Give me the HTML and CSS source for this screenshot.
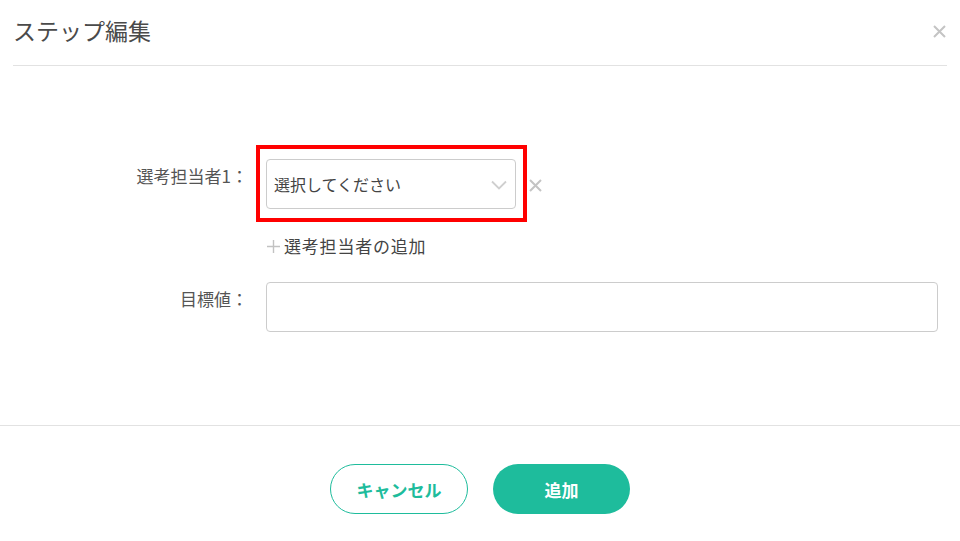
FILE: index.html
```html
<!DOCTYPE html>
<html lang="ja">
<head>
    <meta charset="UTF-8">
    <meta name="viewport" content="width=device-width, initial-scale=1.0">
    <title>ステップ編集</title>
    <link rel="stylesheet" href="styles.css">
</head>
<body>
    <div class="modal">
        <div class="modal-header">
            <h2 class="modal-title">ステップ編集</h2>
            <button type="button" class="modal-close" aria-label="閉じる">
                <svg width="13" height="13" viewBox="0 0 13 13"><path d="M1 1L12 12M12 1L1 12" stroke="#c4c4c4" stroke-width="2" fill="none"/></svg>
            </button>
        </div>

        <form class="modal-body" id="step-form">
            <div class="form-row">
                <label class="form-label" for="reviewer-1">選考担当者1：</label>
                <div class="field-line">
                    <div class="select-wrap highlighted">
                        <select id="reviewer-1" class="form-select">
                            <option>選択してください</option>
                        </select>
                        <svg class="chevron" width="16" height="10" viewBox="0 0 16 10"><path d="M1 1.5L8 8.5L15 1.5" stroke="#cfcfcf" stroke-width="1.8" fill="none"/></svg>
                    </div>
                    <button type="button" class="remove-btn" aria-label="削除">
                        <svg width="13" height="13" viewBox="0 0 13 13"><path d="M1 1L12 12M12 1L1 12" stroke="#c4c4c4" stroke-width="2" fill="none"/></svg>
                    </button>
                </div>
            </div>

            <div class="form-row add-row">
                <span></span>
                <a href="#" class="add-link">
                    <svg class="plus" width="13" height="13" viewBox="0 0 13 13"><path d="M6.5 0V13M0 6.5H13" stroke="#c2c2c2" stroke-width="1.4" fill="none"/></svg>
                    選考担当者の追加
                </a>
            </div>

            <div class="form-row target-row">
                <label class="form-label" for="target">目標値：</label>
                <input type="text" id="target" class="form-input">
            </div>
        </form>

        <div class="modal-footer">
            <button type="button" class="btn btn-outline">キャンセル</button>
            <button type="submit" form="step-form" class="btn btn-primary">追加</button>
        </div>
    </div>
</body>
</html>
```

FILE: styles.css
```css
body {
    margin: 0;
    padding: 0;
    background-color: #fff;
    font-family: "Noto Sans CJK JP", "Noto Sans", sans-serif;
    color: #444;
}

.modal {
    width: 960px;
}

.modal-header {
    display: flex;
    align-items: flex-start;
    justify-content: space-between;
    margin: 0 13px;
    padding-top: 13px;
    height: 66px;
    box-sizing: border-box;
    border-bottom: 1px solid #e2e2e2;
}

.modal-title {
    margin: 0;
    font-size: 23px;
    line-height: 34px;
    font-weight: normal;
    color: #4a4a4a;
}

.modal-close {
    border: none;
    background: none;
    padding: 0;
    margin-top: 12px;
    margin-right: 1px;
    display: flex;
    cursor: pointer;
}

.modal-body {
    padding: 93px 22px 93px 0;
}

.form-row {
    display: grid;
    grid-template-columns: 250px 1fr;
    column-gap: 16px;
    align-items: start;
}

.form-label {
    text-align: right;
    font-size: 17px;
    line-height: 24px;
    padding-top: 5px;
    padding-right: 2px;
    color: #555;
}

.field-line {
    display: flex;
    align-items: center;
    gap: 13px;
}

.select-wrap {
    position: relative;
    width: 250px;
}

.select-wrap.highlighted::after {
    content: "";
    position: absolute;
    top: -14px;
    left: -10px;
    right: -11px;
    bottom: -13px;
    border: 4px solid #f00;
    pointer-events: none;
}

.form-select {
    width: 100%;
    height: 50px;
    padding: 0 34px 0 7px;
    border: 1px solid #ccc;
    border-radius: 4px;
    background: #fff;
    font-family: inherit;
    font-size: 16px;
    color: #444;
    appearance: none;
    box-sizing: border-box;
}

.chevron {
    position: absolute;
    right: 9px;
    top: 21px;
    pointer-events: none;
}

.remove-btn {
    border: none;
    background: none;
    padding: 0;
    margin-top: 3px;
    display: flex;
    cursor: pointer;
}

.add-row {
    margin-top: 25px;
}

.add-link {
    display: flex;
    align-items: center;
    gap: 4px;
    padding-left: 1px;
    font-size: 17px;
    line-height: 24px;
    letter-spacing: 0.8px;
    color: #444;
    text-decoration: none;
}

.target-row {
    margin-top: 24px;
}

.form-input {
    width: 100%;
    height: 50px;
    border: 1px solid #ccc;
    border-radius: 4px;
    box-sizing: border-box;
    font-family: inherit;
    font-size: 16px;
    padding: 0 8px;
}

.modal-footer {
    display: flex;
    justify-content: center;
    gap: 25px;
    border-top: 1px solid #e2e2e2;
    padding-top: 38px;
    height: 116px;
    box-sizing: border-box;
}

.btn {
    height: 50px;
    width: 138px;
    border-radius: 25px;
    font-family: inherit;
    font-size: 17px;
    font-weight: bold;
    cursor: pointer;
    box-sizing: border-box;
}

.btn-outline {
    background: #fff;
    color: #1ebc9c;
    border: 1px solid #1ebc9c;
}

.btn-primary {
    width: 137px;
    background: #1ebc9c;
    color: #fff;
    border: none;
}

.btn-primary:hover {
    background: #17a488;
}
```
